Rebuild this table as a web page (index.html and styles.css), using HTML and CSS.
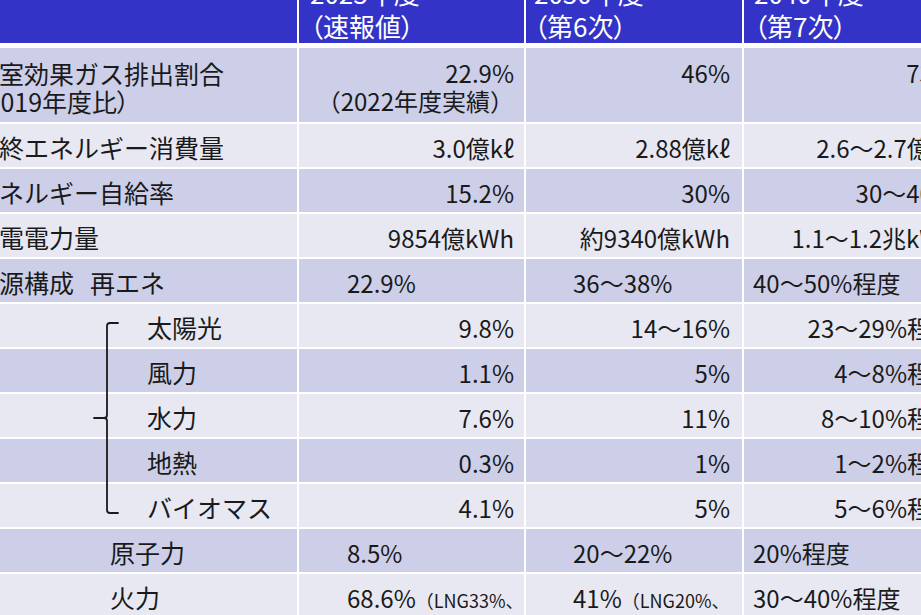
FILE: index.html
```html
<!DOCTYPE html>
<html lang="ja">
<head>
<meta charset="utf-8">
<title>エネルギー基本計画 比較表</title>
<link rel="stylesheet" href="styles.css">
</head>
<body>
<div class="tbl">
  <div class="h c1"></div>
  <div class="h c2">2023年度<br>（速報値）</div>
  <div class="h c3">2030年度<br>（第6次）</div>
  <div class="h c4">2040年度<br>（第7次）</div>

  <div class="c tall dk c1">温室効果ガス排出割合<br><span class="p">（2019年度比）</span></div>
  <div class="c tall dk c2 r"><span>22.9%</span><br><span>（2022年度実績）</span></div>
  <div class="c tall dk c3 r">46%</div>
  <div class="c tall dk c4 r">73%</div>

  <div class="c lt c1">最終エネルギー消費量</div>
  <div class="c lt c2 r">3.0億kℓ</div>
  <div class="c lt c3 r">2.88億kℓ</div>
  <div class="c lt c4 r">2.6～2.7億kℓ</div>

  <div class="c dk c1">エネルギー自給率</div>
  <div class="c dk c2 r">15.2%</div>
  <div class="c dk c3 r">30%</div>
  <div class="c dk c4 r">30～40%</div>

  <div class="c lt c1">発電電力量</div>
  <div class="c lt c2 r">9854億kWh</div>
  <div class="c lt c3 r">約9340億kWh</div>
  <div class="c lt c4 r">1.1～1.2兆kWh</div>

  <div class="c dk c1">電源構成<span class="sub1">再エネ</span></div>
  <div class="c dk c2 l">22.9%</div>
  <div class="c dk c3 l">36～38%</div>
  <div class="c dk c4 l">40～50%程度</div>

  <div class="c lt c1 sub2 anchor">太陽光
    <svg class="bracket" width="337" height="223" viewBox="0 0 337 223">
      <path d="M158 19 H150 Q147 19 147 22 V111 Q147 114 144 114 H134 M144 114 Q147 114 147 117 V206 Q147 209 150 209 H158" fill="none" stroke="#1a1a1a" stroke-width="1.8" stroke-linecap="round"/>
    </svg>
  </div>
  <div class="c lt c2 r">9.8%</div>
  <div class="c lt c3 r">14～16%</div>
  <div class="c lt c4 r">23～29%程度</div>

  <div class="c dk c1 sub2">風力</div>
  <div class="c dk c2 r">1.1%</div>
  <div class="c dk c3 r">5%</div>
  <div class="c dk c4 r">4～8%程度</div>

  <div class="c lt c1 sub2">水力</div>
  <div class="c lt c2 r">7.6%</div>
  <div class="c lt c3 r">11%</div>
  <div class="c lt c4 r">8～10%程度</div>

  <div class="c dk c1 sub2">地熱</div>
  <div class="c dk c2 r">0.3%</div>
  <div class="c dk c3 r">1%</div>
  <div class="c dk c4 r">1～2%程度</div>

  <div class="c lt c1 sub2">バイオマス</div>
  <div class="c lt c2 r">4.1%</div>
  <div class="c lt c3 r">5%</div>
  <div class="c lt c4 r">5～6%程度</div>

  <div class="c dk c1 sub3">原子力</div>
  <div class="c dk c2 l">8.5%</div>
  <div class="c dk c3 l">20～22%</div>
  <div class="c dk c4 l">20%程度</div>

  <div class="c lt c1 sub3">火力</div>
  <div class="c lt c2 l">68.6%<span class="small">（LNG33%、</span></div>
  <div class="c lt c3 l">41%<span class="small">（LNG20%、</span></div>
  <div class="c lt c4 l">30～40%程度</div>
</div>
</body>
</html>
```
FILE: styles.css
```css
html, body {
  margin: 0;
  padding: 0;
  background: #ffffff;
  overflow: hidden;
}

body {
  font-family: "Noto Sans CJK JP", "Noto Sans", sans-serif;
  color: #1a1a1a;
}

.tbl {
  display: grid;
  grid-template-columns: 337px 225px 216px 230px;
  column-gap: 2px;
  row-gap: 2px;
  width: max-content;
  margin: -30px 0 0 -40px;
  background: #ffffff;
}

.h {
  background: #3333c8;
  color: #ffffff;
  height: 73px;
  box-sizing: border-box;
  padding-top: 6px;
  margin-bottom: 3px;
  font-size: 26px;
  line-height: 33px;
  white-space: nowrap;
  font-feature-settings: "palt";
}

.h.c2 { padding-left: 11px; }
.h.c3 { padding-left: 8px; }
.h.c4 { padding-left: 10px; }

.c {
  height: 43px;
  box-sizing: border-box;
  padding-top: 4px;
  font-size: 24px;
  line-height: 39px;
  white-space: nowrap;
}

.c.tall {
  height: 74px;
  padding-top: 11px;
  line-height: 28px;
}

.dk { background: #cdcfe9; }
.lt { background: #e8e8f3; }

.c.c1 {
  font-size: 25px;
  padding-left: 14px;
}

.p { font-feature-settings: "palt"; }

.sub1 { margin-left: 16px; }
.c.sub2 { padding-left: 187px; }
.c.sub3 { padding-left: 150px; }

.r { text-align: right; }
.c2.r { padding-right: 10px; }
.c3.r { padding-right: 12px; }
.c4.r { padding-right: 19px; }

.c2.l { padding-left: 48px; }
.c3.l { padding-left: 47px; }
.c4.l { padding-left: 9px; }

.small {
  font-size: 18px;
}

.anchor { position: relative; }

.bracket {
  position: absolute;
  left: 0;
  top: 0;
  overflow: visible;
}
```
